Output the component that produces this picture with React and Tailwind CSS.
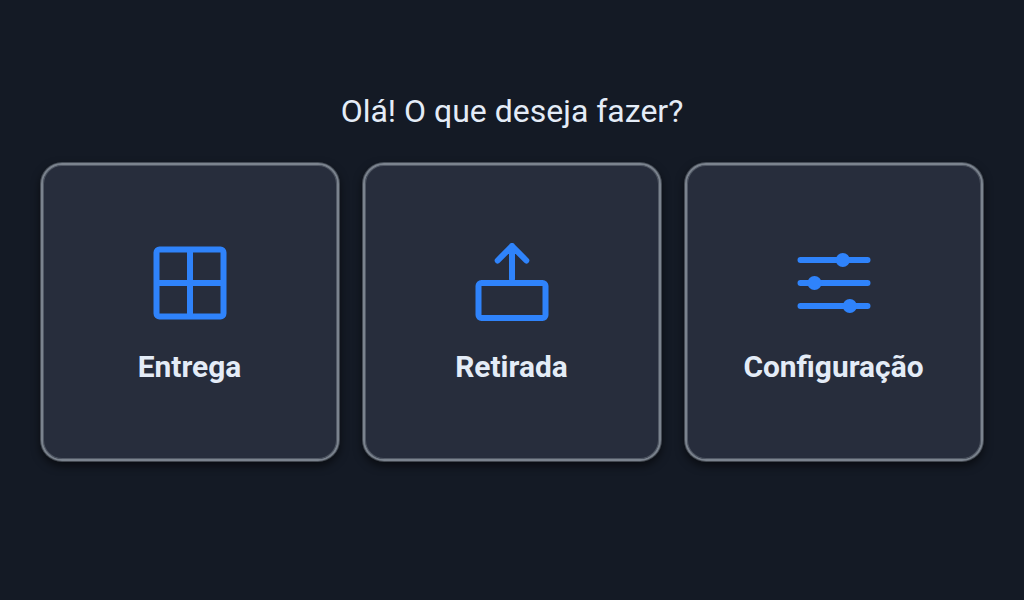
function Grid() {
  return (
    <svg viewBox="0 0 80 80" className="size-20" fill="none" stroke="#2f83fb" strokeWidth="6">
      <rect x="6.5" y="6.4" width="67" height="67.2" rx="3" />
      <path d="M40 6V74M6 40H74" />
    </svg>
  );
}

function Upload() {
  return (
    <svg viewBox="0 0 80 80" className="size-20" fill="none" stroke="#2f83fb" strokeWidth="6" strokeLinecap="round" strokeLinejoin="round">
      <rect x="6.5" y="40" width="67" height="35" rx="3" />
      <path d="M40 36V3M25.7 17.5L40 3L54.3 17.5" />
    </svg>
  );
}

function Sliders() {
  return (
    <svg viewBox="0 0 80 80" className="size-20" fill="#2f83fb" stroke="#2f83fb" strokeWidth="6" strokeLinecap="round">
      <path d="M6.5 17H73.5M6.5 40H73.5M6.5 63H73.5" />
      <g stroke="none">
        <circle cx="48.8" cy="17" r="7" />
        <circle cx="20.5" cy="40" r="7" />
        <circle cx="55.8" cy="63" r="7" />
      </g>
    </svg>
  );
}

const actions = [
  { label: "Entrega", Icon: Grid },
  { label: "Retirada", Icon: Upload },
  { label: "Configuração", Icon: Sliders },
];

export default function App() {
  return (
    <main className="flex h-[600px] w-[1024px] flex-col items-center bg-[#141a25] pt-[91px] font-['Roboto',sans-serif] text-[#e4ecf7]">
      <h1 className="text-[32px] leading-10">Olá! O que deseja fazer?</h1>
      <div className="mt-8 flex gap-6">
        {actions.map(({ label, Icon }) => (
          <button key={label} className="flex size-[298px] flex-col items-center rounded-[21px] border-2 border-[#7b838e] bg-[#272d3c] pt-[78px] shadow-[inset_0_0_0_1px_rgba(123,131,142,0.5),0_0_0_1px_rgba(123,131,142,0.5),0_4px_8px_1px_rgba(0,0,0,0.55)]">
            <Icon />
            <span className="mt-6 pr-px text-[29.9px] leading-10 font-bold">{label}</span>
          </button>
        ))}
      </div>
    </main>
  );
}
